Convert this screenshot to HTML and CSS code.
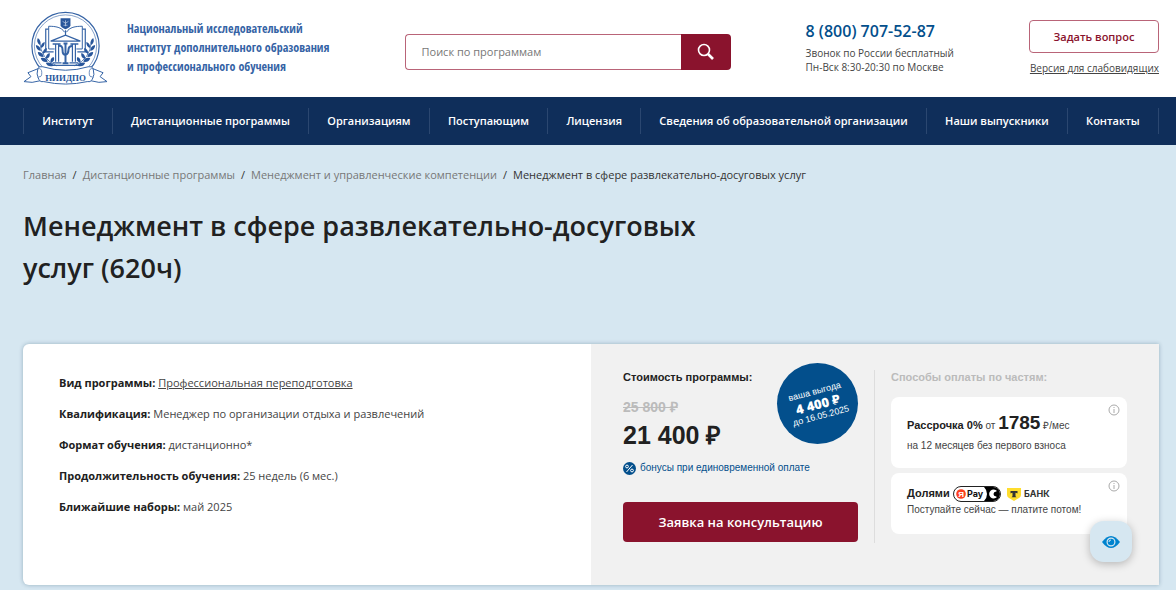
FILE: index.html
```html
<!DOCTYPE html>
<html lang="ru">
  <head>
    <meta charset="utf-8">
    <meta name="viewport" content="width=device-width, initial-scale=1">
    <title>Менеджмент в сфере развлекательно-досуговых услуг (620ч)</title>
    <link rel="stylesheet" href="styles.css">
  </head>
  <body>
    <header class="header wrap">
      <a href="#" class="brand">
        <svg class="brand-logo" viewBox="8 5 87 75" fill="none" stroke="#3563a5">
          <circle cx="51" cy="41" r="34" stroke-width="1.2" />
          <circle cx="51" cy="41" r="31.5" stroke-width=".6" />
          <!-- book -->
          <path d="M50 27c-3-5-9-6-16-6v23h6M52 27c3-5 9-6 16-6v23h-6" />
          <path d="M34 24h-3v23h8M68 24h3v23h-8M51 25v6" stroke-width="1.2" />
          <!-- coat of arms -->
          <path d="M46 13h10v7q0 2-5 4q-5-2-5-4z" fill="#28569b" stroke="none" />
          <path d="M48 16l3 2 3-2M51 15v6M49 20h4" stroke="#c9d7ea" stroke-width=".7" />
          <!-- temple -->
          <path d="M36 36L51 30l15 6z" fill="#fff" stroke-width="1.400" />
          <path d="M38 39h8M56 39h8" stroke-width="1.400" />
          <path d="M41 39v18M44 39v18M58 39v18M61 39v18M38 58h9M55 58h9M35 60.500h32" stroke-width="1.200" />
          <path d="M44 41q4-1 4 4t3 5q3-1 3-5t4-4M51 38v20M48 58.500h6M49 38.500h4" stroke-width="2" />
          <!-- laurel branches -->
          <path d="M25 37q1 17 17 24M77 37q-1 17-17 24" stroke-width=".8" />
          <g fill="#28569b" stroke="none">
            <path id="leaf" d="M25 40q-4-3-2-7q4 3 2 7zM26 46q-5-1-5-6q5 1 5 6zM26 43q0-5 4-6q0 5-4 6zM29 52q-6 0-6-5q5 0 6 5zM28 49q0-5 4-6q1 4-4 6zM33 57q-6 1-7-4q6-1 7 4zM31 54q0-5 4-6q1 5-4 6zM39 61q-6 2-8-3q6-1 8 3zM36 58q-1-5 3-6q2 4-3 6z" />
            <use href="#leaf" transform="matrix(-1 0 0 1 102 0)" />
          </g>
          <!-- ribbon -->
          <path d="M23 64l-10 4 3 4-7 5q8 2 17-1l-3-3M79 64l10 4-3 4 7 5q-8 2-17-1l3-3" fill="#fff" />
          <path d="M23 64q1-3 5-2q23 7 46 0q4-1 5 2q2 6-1 11q-2 3-5 2q-22 5-44 0q-3 1-5-2q-3-6-1-11z" fill="#fff" />
          <path d="M23 64q4-1 4 4t-3 4M79 64q-4-1-4 4t3 4" stroke-width=".7" />
          <text class="ribbon-text" x="51" y="76" text-anchor="middle">НИИДПО</text>
        </svg>
        <span class="brand-name">Национальный исследовательский<br>институт дополнительного образования<br>и профессионального обучения</span>
      </a>

      <form class="search">
        <input type="text" class="search-input" placeholder="Поиск по программам" aria-label="Поиск по программам">
        <button type="submit" class="search-btn" aria-label="Найти">
          <svg width="18" height="18" viewBox="0 0 18 18" fill="none" stroke="#fff">
            <circle cx="7" cy="7" r="5.500" stroke-width="1.600" />
            <path d="M11 11l5 5" stroke-width="2.600" />
          </svg>
        </button>
      </form>

      <div class="contacts">
        <a href="tel:88007075287" class="phone">8 (800) 707-52-87</a>
        <p>Звонок по России бесплатный<br>Пн-Вск 8:30-20:30 по Москве</p>
      </div>

      <div class="actions">
        <button type="button" class="ask-btn">Задать вопрос</button>
        <a href="#">Версия для слабовидящих</a>
      </div>
    </header>

    <nav class="nav">
      <ul class="nav-list wrap">
        <li><a href="#">Институт</a></li>
        <li><a href="#">Дистанционные программы</a></li>
        <li><a href="#">Организациям</a></li>
        <li><a href="#">Поступающим</a></li>
        <li><a href="#">Лицензия</a></li>
        <li><a href="#">Сведения об образовательной организации</a></li>
        <li><a href="#">Наши выпускники</a></li>
        <li><a href="#">Контакты</a></li>
      </ul>
    </nav>

    <main class="wrap">
      <div class="breadcrumbs">
        <a href="#">Главная</a>
        <span>/</span>
        <a href="#">Дистанционные программы</a>
        <span>/</span>
        <a href="#">Менеджмент и управленческие компетенции</a>
        <span>/</span>
        <span>Менеджмент в сфере развлекательно-досуговых услуг</span>
      </div>

      <h1>Менеджмент в сфере развлекательно-досуговых услуг (620ч)</h1>

      <section class="program">
        <div class="program-info">
          <p><b>Вид программы:</b> <a href="#">Профессиональная переподготовка</a></p>
          <p><b>Квалификация:</b> Менеджер по организации отдыха и развлечений</p>
          <p><b>Формат обучения:</b> дистанционно*</p>
          <p><b>Продолжительность обучения:</b> 25 недель (6 мес.)</p>
          <p><b>Ближайшие наборы:</b> май 2025</p>
        </div>

        <div class="program-cost">
          <div class="price">
            <h2>Стоимость программы:</h2>
            <s class="price-old">25 800 ₽</s>
            <div class="price-new">21 400 ₽</div>
            <div class="bonus">
              <svg width="13" height="13" viewBox="0 0 13 13">
                <circle cx="6.500" cy="6.500" r="6.500" fill="#034f8c" />
                <g fill="none" stroke="#fff">
                  <circle cx="4" cy="4.500" r="1.400" />
                  <circle cx="9" cy="8.500" r="1.400" />
                  <path d="M9.500 3l-6 7" />
                </g>
              </svg>
              бонусы при единовременной оплате
            </div>
            <button type="button" class="order-btn">Заявка на консультацию</button>
            <div class="discount">
              <div class="discount-text">
                ваша выгода
                <b>4 400 ₽</b>
                до 16.05.2025
              </div>
            </div>
          </div>

          <div class="payments">
            <h2>Способы оплаты по частям:</h2>
            <div class="payment">
              <div class="payment-title"><b>Рассрочка 0%</b> от <b class="payment-sum">1785</b> ₽/мес</div>
              <p>на 12 месяцев без первого взноса</p>
              <button type="button" class="info-btn" aria-label="Подробнее">
                <svg width="12" height="12" viewBox="0 0 12 12" fill="none" stroke="#aaa">
                  <circle cx="6" cy="6" r="5" />
                  <path d="M6 5v4M6 3v1" />
                </svg>
              </button>
            </div>
            <div class="payment payment-parts">
              <div class="payment-title payment-logos">
                <b>Долями</b>
                <svg width="48" height="16" viewBox="0 0 48 16">
                  <rect x=".5" y=".5" width="47" height="15" rx="7.500" fill="#fff" stroke="#222" />
                  <path d="M31 1h9a7 7 0 0 1 0 14h-9q3-3 3-7t-3-7z" fill="#000" />
                  <circle cx="8" cy="8" r="4.800" fill="#fc3f1d" />
                  <text class="ya-letter" x="8" y="11" text-anchor="middle">Я</text>
                  <text class="ya-pay" x="14" y="11">Pay</text>
                  <path d="M44 5a4.500 4.500 0 1 0 0 6l-3-1.500v-3z" fill="#fff" />
                  <circle cx="42" cy="8" r="1.500" fill="#000" />
                </svg>
                <svg width="45" height="14" viewBox="0 0 45 14">
                  <path d="M0 1h14v7q0 2-2 3l-5 3-5-3q-2-1-2-3z" fill="#ffdd2d" />
                  <path d="M3.500 4h7v2.500q-1-.8-2-.8v3.500l1 1h-5l1-1V5.700q-1 0-2 .8z" fill="#333" />
                  <text class="bank-name" x="17" y="10">БАНК</text>
                </svg>
              </div>
              <p>Поступайте сейчас — платите потом!</p>
              <button type="button" class="info-btn" aria-label="Подробнее">
                <svg width="12" height="12" viewBox="0 0 12 12" fill="none" stroke="#aaa">
                  <circle cx="6" cy="6" r="5" />
                  <path d="M6 5v4M6 3v1" />
                </svg>
              </button>
            </div>
          </div>
        </div>
      </section>
    </main>

    <button type="button" class="eye-btn" aria-label="Режим для слабовидящих">
      <svg width="18" height="12" viewBox="0 0 18 12">
        <path d="M0 6q9-12 18 0q-9 12-18 0z" fill="#0083ce" />
        <circle cx="9" cy="6" r="3.900" fill="none" stroke="#d6e7f1" stroke-width="1.200" />
        <path d="M9 4a2 2 0 0 0-2 2" fill="none" stroke="#d6e7f1" />
      </svg>
    </button>
  </body>
</html>
```
FILE: styles.css
```css
:root {
  --red: #8a132d;
  --blue: #034f8c;
  --nav: #0f2e5a;
  --page: #d6e7f1;
  --text: #212121;
  --text-light: #444;
}

* {
  box-sizing: border-box;
}

body {
  margin: 0;
  min-height: 100vh;
  background: var(--page);
  color: var(--text);
  font-family: "Open Sans", "Noto Sans", sans-serif;
  font-size: 11px;
}

a {
  color: inherit;
}

h1,
h2,
p {
  margin: 0;
}

button {
  border: none;
  padding: 0;
  font-family: inherit;
  cursor: pointer;
}

svg {
  display: block;
  flex-shrink: 0;
}

.wrap {
  padding-left: 23px;
  padding-right: 17px;
}

/* header */

.header {
  display: flex;
  justify-content: space-between;
  align-items: center;
  height: 97px;
  padding-bottom: 2px;
  background-color: #fff;
}

.brand {
  display: flex;
  align-items: center;
  gap: 18px;
  color: #3563a5;
  text-decoration: none;
}

.brand-logo {
  width: 86px;
  height: 75px;
}

.ribbon-text {
  font: bold 9px "Liberation Serif", serif;
  fill: #28569b;
  stroke: none;
}

.brand-name {
  font-family: "Open Sans Condensed", "Liberation Sans Narrow",
    "Open Sans", sans-serif;
  font-size: 12px;
  font-weight: 300;
  line-height: 19px;
  white-space: nowrap;
}

.search {
  display: flex;
  width: 326px;
  height: 36px;
  margin-top: 8px;
}

.search-input {
  flex: 1;
  min-width: 0;
  padding: 0 16px;
  border: 1px solid #b96478;
  border-right: none;
  border-radius: 4px 0 0 4px;
  font-family: inherit;
  font-size: 11px;
}

.search-input::placeholder {
  color: #777;
}

.search-btn {
  display: flex;
  align-items: center;
  justify-content: center;
  width: 50px;
  border-radius: 0 4px 4px 0;
  background-color: var(--red);
}

.contacts {
  padding-bottom: 2px;
  color: var(--text-light);
  font-size: 10px;
  line-height: 14px;
}

.phone {
  display: block;
  margin-bottom: 4px;
  color: var(--blue);
  font-size: 16px;
  font-weight: 600;
  line-height: 22px;
  text-decoration: none;
}

.actions {
  display: flex;
  flex-direction: column;
  align-items: flex-end;
  gap: 8px;
  color: var(--text-light);
  font-size: 10px;
  line-height: 14px;
}

.ask-btn {
  width: 130px;
  height: 33px;
  border: 1px solid #b96478;
  border-radius: 4px;
  background-color: #fff;
  color: var(--red);
  font-size: 11px;
  font-weight: 600;
}

/* navigation */

.nav {
  background-color: var(--nav);
  color: #fff;
  font-weight: 600;
}

.nav-list {
  display: flex;
  align-items: center;
  height: 48px;
  margin: 0;
  list-style: none;
}

.nav-list li {
  flex: 1 1 auto;
  border-right: 1px solid #2b4770;
  line-height: 26px;
  text-align: center;
}

.nav-list li:first-child {
  border-left: 1px solid #2b4770;
}

.nav-list a {
  text-decoration: none;
}

/* page title */

.breadcrumbs {
  display: flex;
  gap: 6px;
  padding: 21px 0;
  color: #333;
  line-height: 18px;
}

.breadcrumbs a {
  color: #777;
  text-decoration: none;
}

h1 {
  max-width: 740px;
  margin-bottom: 55px;
  font-size: 27px;
  font-weight: 600;
  line-height: 42px;
}

/* program card */

.program {
  display: grid;
  grid-template-columns: 1fr 1fr;
  min-height: 241px;
  border-radius: 6px 0 0 6px;
  background-color: #fff;
  box-shadow: 0 0 4px rgba(0, 50, 80, 0.3);
}

.program-info {
  display: flex;
  flex-direction: column;
  gap: 13px;
  padding: 30px 36px;
  color: var(--text-light);
  line-height: 18px;
}

.program-info b {
  color: var(--text);
}

.program-cost {
  display: grid;
  grid-template-columns: 1fr 1fr;
  padding: 26px 32px 42px;
  background-color: #f1f1f1;
  font-family: "Liberation Sans", Arial, sans-serif;
}

h2 {
  font-size: 11px;
  line-height: 14px;
}

.price {
  position: relative;
  padding-right: 16px;
  border-right: 1px solid #ddd;
}

.price-old {
  display: block;
  margin-top: 14px;
  color: #bbb;
  font-size: 14px;
  font-weight: bold;
  line-height: 18px;
}

.price-new {
  margin-top: 4px;
  font-size: 25px;
  font-weight: bold;
  line-height: 30px;
}

.bonus {
  display: flex;
  align-items: center;
  gap: 4px;
  margin-top: 11px;
  color: var(--blue);
  font-size: 10px;
  line-height: 14px;
  white-space: nowrap;
}

.order-btn {
  width: 100%;
  height: 40px;
  margin-top: 27px;
  border-radius: 4px;
  background-color: var(--red);
  color: #fff;
  font-family: "Open Sans", "Noto Sans", sans-serif;
  font-size: 13px;
  font-weight: 600;
}

.discount {
  position: absolute;
  top: -7px;
  right: 16px;
  display: flex;
  align-items: center;
  justify-content: center;
  width: 81px;
  height: 81px;
  border-radius: 50%;
  background-color: var(--blue);
}

.discount-text {
  color: #fff;
  font-size: 9px;
  line-height: 11px;
  text-align: center;
  white-space: nowrap;
  transform: rotate(-15deg);
}

.discount-text b {
  display: block;
  font-family: "Open Sans", "Noto Sans", sans-serif;
  font-size: 13px;
  font-weight: 800;
  line-height: 14px;
}

.payments {
  padding-left: 16px;
}

.payments h2 {
  margin-bottom: 13px;
  color: #bbb;
}

.payment {
  position: relative;
  margin-bottom: 5px;
  padding: 14px 16px;
  border-radius: 8px;
  background-color: #fff;
  color: var(--text-light);
  font-size: 10px;
  line-height: 16px;
}

.payment-title {
  line-height: 24px;
  white-space: nowrap;
}

.payment-title b {
  color: var(--text);
  font-size: 11px;
}

.payment-title .payment-sum {
  font-size: 19px;
}

.payment-parts {
  padding: 12px 16px 16px;
}

.payment-logos {
  display: flex;
  align-items: center;
  gap: 3px;
  line-height: 17px;
}

.payment-logos svg + svg {
  margin-left: 3px;
}

.ya-letter {
  font: bold 8px "Liberation Sans", sans-serif;
  fill: #fff;
}

.ya-pay {
  font: bold 9px Inter, sans-serif;
  fill: #111;
}

.bank-name {
  font: bold 9px Inter, sans-serif;
  fill: #333;
}

.info-btn {
  position: absolute;
  top: 7px;
  right: 7px;
  background: none;
}

.eye-btn {
  position: fixed;
  right: 44px;
  bottom: 28px;
  display: flex;
  align-items: center;
  justify-content: center;
  width: 42px;
  height: 41px;
  border-radius: 14px;
  background-color: var(--page);
  box-shadow: 0 2px 8px rgba(0, 0, 0, 0.25);
}
```
